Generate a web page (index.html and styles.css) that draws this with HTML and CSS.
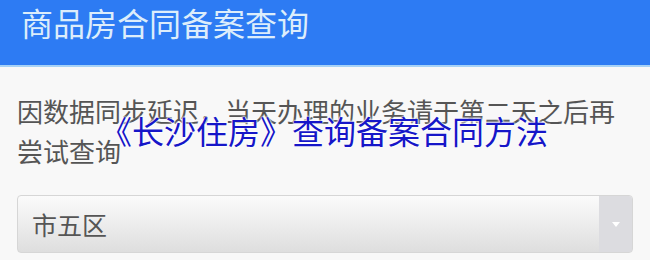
FILE: index.html
```html
<!DOCTYPE html>
<html>
<head>
  <title>商品房合同备案查询</title>
  <meta charset="utf-8">
  <meta name="viewport" content="width=device-width, initial-scale=1">
  <link rel="stylesheet" href="styles.css">
</head>
<body>

  <div class="header">
    <h1>商品房合同备案查询</h1>
  </div>

  <div class="content">
    <p class="notice">因数据同步延迟，当天办理的业务请于第二天之后再尝试查询</p>

    <div class="picker">
      <span class="picker-text">市五区</span>
      <span class="picker-arrow"></span>
    </div>
  </div>

  <!-- watermark caption laid over the page -->
  <div class="caption">《长沙住房》查询备案合同方法</div>

</body>
</html>
```

FILE: styles.css
```css
body {
  margin: 0;
  background: #f8f8f8;
  font-family: "Noto Sans CJK SC", "Noto Sans", sans-serif;
  position: relative;
}
.header {
  height: 65px;
  background: #2d7bf3;
  border-bottom: 2px solid #a6d2f6;
  padding: 0 21px;
}
h1 {
  margin: 0;
  font-size: 32px;
  font-weight: 400;
  line-height: 44px;
  color: #dcedfb;
}
.content {
  padding: 24px 17px 0;
}
.notice {
  margin: 0;
  font-size: 26px;
  line-height: 40px;
  color: #555;
}
.picker {
  margin-top: 24px;
  height: 58px;
  display: flex;
  align-items: stretch;
  border: 1px solid #d6d6d6;
  border-radius: 4px;
  background: linear-gradient(#fbfbfb, #dedede);
  box-sizing: border-box;
  overflow: hidden;
}
.picker-text {
  flex: 1;
  display: flex;
  align-items: center;
  padding-left: 14px;
  font-size: 25px;
  color: #555;
}
.picker-arrow {
  width: 33px;
  background: #dcdce0;
  display: flex;
  align-items: center;
  justify-content: center;
}
.picker-arrow::after {
  content: "";
  border-left: 4px solid transparent;
  border-right: 4px solid transparent;
  border-top: 5px solid #fff;
}
.caption {
  position: absolute;
  left: 100px;
  top: 112px;
  font-size: 32px;
  line-height: 36px;
  color: #1616c8;
  text-shadow: 0 0 2px #fff, 0 0 2px #fff, 0 0 3px #fff;
  white-space: nowrap;
}
```
